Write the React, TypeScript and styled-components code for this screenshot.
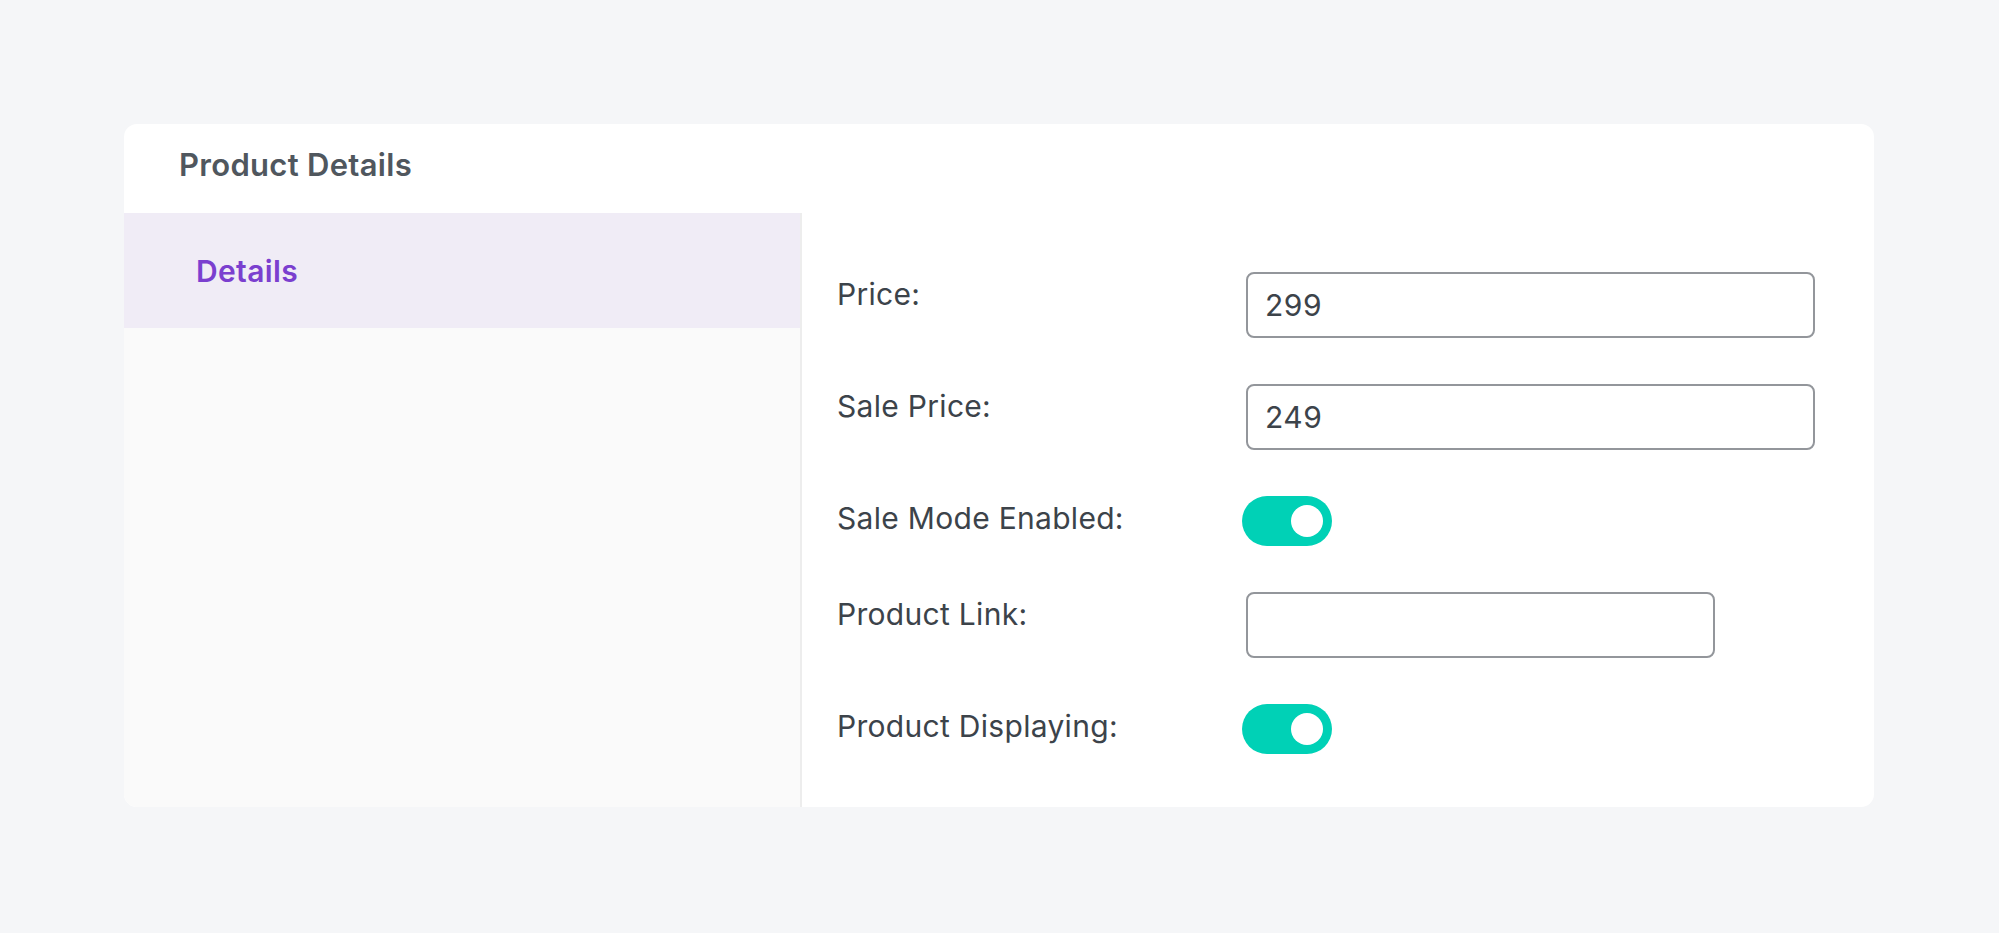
import React, { useState } from "react";
import styled, { createGlobalStyle } from "styled-components";

const GlobalStyle = createGlobalStyle`
  html, body {
    margin: 0;
    padding: 0;
    background: #f5f6f8;
    font-family: Inter, "Noto Sans", "Liberation Sans", sans-serif;
  }
  * { box-sizing: border-box; }
`;

const Page = styled.div`
  padding: 124px 125px 126px 124px;
  min-height: 933px;
`;

const Card = styled.section`
  background: #ffffff;
  border-radius: 13px;
  overflow: hidden;
  display: flex;
  flex-direction: column;
`;

const Header = styled.header`
  height: 89px;
  padding: 25px 0 0 55px;
`;

const Title = styled.h2`
  margin: 0;
  font-size: 31px;
  line-height: 1;
  font-weight: 600;
  color: #50575e;
  letter-spacing: 0.3px;
`;

const Body = styled.div`
  display: flex;
`;

const Sidebar = styled.nav`
  width: 678px;
  background: #fafafa;
  border-right: 2px solid #ededed;
  display: flex;
  flex-direction: column;
`;

const NavItem = styled.div<{ $active?: boolean }>`
  height: 115px;
  display: flex;
  align-items: center;
  padding-left: 72px;
  font-size: 30px;
  font-weight: 600;
  letter-spacing: 0.35px;
  color: ${(p) => (p.$active ? "#7b3fcf" : "#50575e")};
  background: ${(p) => (p.$active ? "#f0ecf6" : "transparent")};
`;

const Main = styled.div`
  flex: 1;
  padding: 59px 58px 53px 35px;
`;

const Form = styled.div`
  display: grid;
  grid-template-columns: 409px 569px;
  row-gap: 46px;
  align-items: start;
`;

const Label = styled.label`
  font-size: 30px;
  line-height: 45px;
  letter-spacing: 0.3px;
  color: #3c434a;
`;

const Input = styled.input<{ $width?: number }>`
  width: ${(p) => (p.$width ? `${p.$width}px` : "100%")};
  height: 66px;
  border: 2px solid #93969b;
  border-radius: 8px;
  padding: 0 17px;
  font-family: inherit;
  font-size: 30px;
  letter-spacing: 0.5px;
  color: #3c434a;
  background: #fff;
  outline: none;
`;

const Toggle = styled.button<{ $on: boolean }>`
  position: relative;
  width: 90px;
  height: 50px;
  margin-left: -4px;
  border: none;
  border-radius: 25px;
  padding: 0;
  cursor: pointer;
  background: ${(p) => (p.$on ? "#00d1b6" : "#c3c4c7")};

  &::after {
    content: "";
    position: absolute;
    top: 9px;
    left: ${(p) => (p.$on ? "49px" : "9px")};
    width: 32px;
    height: 32px;
    border-radius: 50%;
    background: #fff;
  }
`;

export default function App() {
  const [price, setPrice] = useState("299");
  const [sale, setSale] = useState("249");
  const [saleMode, setSaleMode] = useState(true);
  const [link, setLink] = useState("");
  const [displaying, setDisplaying] = useState(true);

  return (
    <>
      <GlobalStyle />
      <Page>
        <Card>
          <Header>
            <Title>Product Details</Title>
          </Header>
          <Body>
            <Sidebar>
              <NavItem $active>Details</NavItem>
            </Sidebar>
            <Main>
              <Form>
                <Label>Price:</Label>
                <Input value={price} onChange={(e) => setPrice(e.target.value)} />
                <Label>Sale Price:</Label>
                <Input value={sale} onChange={(e) => setSale(e.target.value)} />
                <Label>Sale Mode Enabled:</Label>
                <Toggle $on={saleMode} onClick={() => setSaleMode(!saleMode)} aria-label="Sale Mode Enabled" />
                <Label>Product Link:</Label>
                <Input $width={469} value={link} onChange={(e) => setLink(e.target.value)} />
                <Label>Product Displaying:</Label>
                <Toggle $on={displaying} onClick={() => setDisplaying(!displaying)} aria-label="Product Displaying" />
              </Form>
            </Main>
          </Body>
        </Card>
      </Page>
    </>
  );
}
